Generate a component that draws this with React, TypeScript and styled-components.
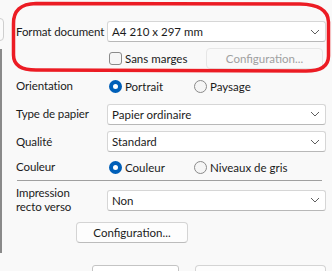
import styled, { createGlobalStyle } from 'styled-components';

const GlobalStyle = createGlobalStyle`
  html, body {
    margin: 0;
    padding: 0;
    background: #f9f9f9;
    overflow: hidden;
  }
  body {
    font-family: 'Lato', 'Segoe UI', sans-serif;
    font-size: 11.5px;
    color: #1b1b1b;
    white-space: nowrap;
  }
`;

const Page = styled.div`
  position: relative;
  display: flex;
  width: 332px;
  height: 271px;
  overflow: hidden;
`;

const Sidebar = styled.div`
  width: 4px;
  flex-shrink: 0;
  display: flex;
  flex-direction: column;
  overflow: hidden;
`;

const SideBox = styled.div`
  flex-shrink: 0;
  margin: 18px 0 0 -8px;
  width: 10px;
  height: 21px;
  border: 1px solid #cfcfcf;
  border-radius: 4px;
  background: #fbfbfb;
`;

const SideLine = styled.div`
  flex-shrink: 0;
  margin-top: 8px;
  width: 2px;
  height: 204px;
  background: #8a8a8a;
`;

const Content = styled.div`
  flex: 1;
  padding: 18px 6px 0 12px;
  display: flex;
  flex-direction: column;

  & > * {
    flex-shrink: 0;
  }
`;

const Row = styled.div<{ $h: number }>`
  display: grid;
  grid-template-columns: 91px 1fr;
  align-items: center;
  height: ${(p) => p.$h}px;
`;

const Label = styled.div`
  line-height: 14px;
  letter-spacing: -0.1px;
`;

const Select = styled.div`
  height: 19px;
  display: flex;
  align-items: center;
  justify-content: space-between;
  padding: 0 5px 0 4px;
  background: #ffffff;
  border: 1px solid #d6d6d6;
  border-bottom-color: #b8b8b8;
  border-radius: 3px;
`;

const Chevron = () => (
  <svg width="10" height="6" viewBox="0 0 10 6">
    <path d="M1 1 L5 5 L9 1" fill="none" stroke="#5f5f5f" strokeWidth="1" />
  </svg>
);

const Controls = styled.div`
  display: flex;
  align-items: center;
  padding-left: 2px;
`;

const Option = styled.label`
  display: flex;
  align-items: center;
  gap: 3px;
  min-width: 85px;
`;

const Radio = styled.span<{ $on?: boolean }>`
  box-sizing: border-box;
  width: 13px;
  height: 13px;
  border-radius: 50%;
  background: ${(p) => (p.$on ? '#ffffff' : '#f5f5f5')};
  border: ${(p) => (p.$on ? '4px solid #005fb8' : '1px solid #8a8a8a')};
`;

const Checkbox = styled.span`
  box-sizing: border-box;
  width: 13px;
  height: 13px;
  border-radius: 3px;
  border: 1px solid #8a8a8a;
  background: #f6f6f6;
`;

const Button = styled.div<{ $disabled?: boolean; $w: number }>`
  box-sizing: border-box;
  width: ${(p) => p.$w}px;
  height: 21px;
  display: flex;
  align-items: center;
  justify-content: center;
  border-radius: 4px;
  background: ${(p) => (p.$disabled ? '#f9f9f9' : '#fdfdfd')};
  border: 1px solid ${(p) => (p.$disabled ? '#e6e6e6' : '#d4d4d4')};
  border-bottom-color: ${(p) => (p.$disabled ? '#e6e6e6' : '#bcbcbc')};
  color: ${(p) => (p.$disabled ? '#a0a0a0' : '#1b1b1b')};
`;

const CheckRow = styled.div`
  display: flex;
  align-items: center;
  justify-content: space-between;
  padding: 0 3px 0 2px;
`;

const Separator = styled.div`
  margin: 2px 4px 0 1px;
  height: 1px;
  background: #a0a0a0;
`;

const ButtonRow = styled.div`
  margin-top: 3px;
  padding-left: 60px;
`;

const BottomRow = styled.div`
  margin-top: 22px;
  display: flex;
  align-items: flex-start;
`;

const SmallLabel = styled.div`
  width: 76px;
  padding-top: 5px;
`;

const Field = styled.div`
  width: 85px;
  height: 20px;
  border: 1px solid #c4c4c4;
  border-radius: 3px;
  background: #ffffff;
  margin-right: 16px;
`;

const Outline = styled.svg`
  position: absolute;
  left: 0;
  top: 0;
  pointer-events: none;
`;

export default function App() {
  return (
    <>
      <GlobalStyle />
      <Page>
        <Sidebar>
          <SideBox />
          <SideLine />
        </Sidebar>
        <Content>
          <Row $h={27}>
            <Label>Format document</Label>
            <Select>
              <span>A4 210 x 297 mm</span>
              <Chevron />
            </Select>
          </Row>
          <Row $h={26}>
            <span />
            <CheckRow>
              <Option>
                <Checkbox />
                Sans marges
              </Option>
              <Button $disabled $w={117}>Configuration...</Button>
            </CheckRow>
          </Row>
          <Row $h={30}>
            <Label>Orientation</Label>
            <Controls>
              <Option>
                <Radio $on />
                Portrait
              </Option>
              <Option>
                <Radio />
                Paysage
              </Option>
            </Controls>
          </Row>
          <Row $h={26}>
            <Label>Type de papier</Label>
            <Select>
              <span>Papier ordinaire</span>
              <Chevron />
            </Select>
          </Row>
          <Row $h={29}>
            <Label>Qualité</Label>
            <Select>
              <span>Standard</span>
              <Chevron />
            </Select>
          </Row>
          <Row $h={22}>
            <Label>Couleur</Label>
            <Controls>
              <Option>
                <Radio $on />
                Couleur
              </Option>
              <Option>
                <Radio />
                Niveaux de gris
              </Option>
            </Controls>
          </Row>
          <Separator />
          <Row $h={38}>
            <Label>
              Impression
              <br />
              recto verso
            </Label>
            <Select>
              <span>Non</span>
              <Chevron />
            </Select>
          </Row>
          <ButtonRow>
            <Button $w={112}>Configuration...</Button>
          </ButtonRow>
          <BottomRow>
            <SmallLabel>Copies</SmallLabel>
            <Field />
            <Button $w={131}>Avancé...</Button>
          </BottomRow>
        </Content>
        <Outline width="332" height="80" viewBox="0 0 332 80">
          <path
            d="M 13.5 24 Q 13 4 36 3.5 L 300 4 Q 328 4.5 328.5 22 L 328.5 56 Q 328.5 71 306 71 L 36 70 Q 13.5 70 13.5 55 Z"
            fill="none"
            stroke="#ec1c24"
            strokeWidth="3.5"
          />
        </Outline>
      </Page>
    </>
  );
}
